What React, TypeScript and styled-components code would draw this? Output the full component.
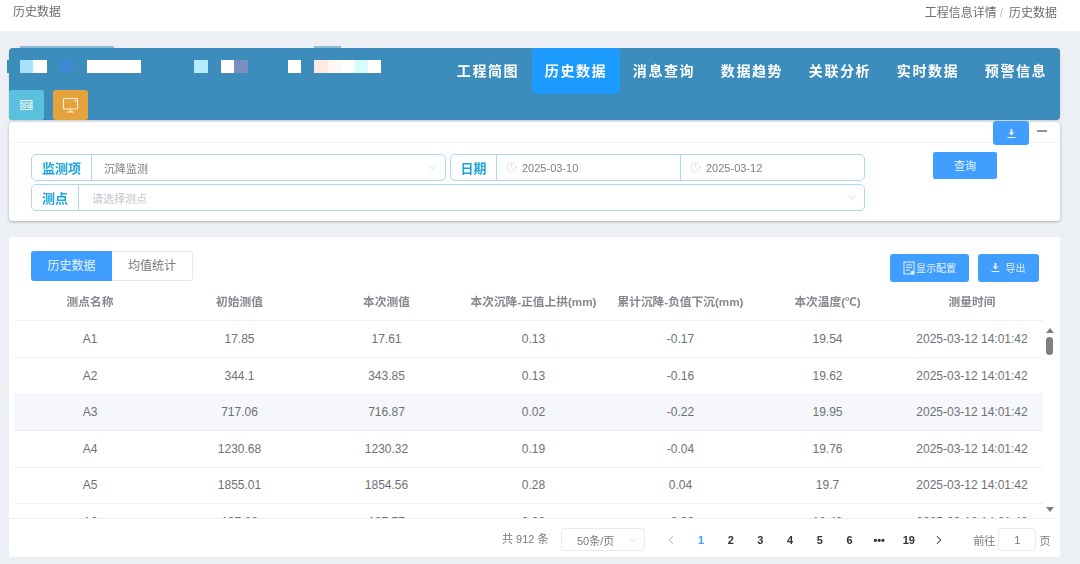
import React from "react";
import styled, { createGlobalStyle } from "styled-components";
import { ChevronDown, ChevronLeft, ChevronRight, Clock } from "lucide-react";

const Global = createGlobalStyle`
  html, body { margin: 0; padding: 0; height: 100%; overflow: hidden; background: #ecf0f5; }
  body { font-family: "Liberation Sans", "Noto Sans CJK SC", sans-serif; color: #606266; }
  * { box-sizing: border-box; }
`;

const Page = styled.div`
  width: 1080px;
  height: 564px;
  display: flex;
  flex-direction: column;
  filter: blur(0.35px);
`;
const TopBar = styled.div`
  height: 31px;
  flex: none;
  background: #fff;
  display: flex;
  justify-content: space-between;
  align-items: flex-start;
  padding: 5px 23px 0 13px;
  font-size: 12px;
  line-height: 14px;
  color: #6b6e73;
`;
const Crumbs = styled.div`
  display: flex;
  margin-top: 1px;
  span { color: #b4b7bc; margin: 0 6px 0 3px; }
`;
const Main = styled.div`
  flex: 1;
  display: flex;
  flex-direction: column;
  padding: 17px 20px 0 9px;
`;
const Header = styled.div`
  position: relative;
  height: 72px;
  flex: none;
  background: #3d8dbc;
  border-radius: 4px;
  display: flex;
  flex-direction: column;
  box-shadow: 0 1px 2px rgba(0, 0, 0, 0.15);
`;
const HeaderTop = styled.div`
  height: 42px;
  flex: none;
  display: flex;
  justify-content: space-between;
`;
const Mosaic = styled.div`
  display: flex;
  height: 13px;
  margin: 12px 0 0 11px;
`;
const Tile = styled.i<{ $c: string; $w?: number }>`
  display: block;
  height: 13px;
  width: ${(p) => p.$w ?? 13.4}px;
  background: ${(p) => p.$c};
`;
const Bump = styled.i<{ $l: number; $w: number }>`
  position: absolute;
  left: ${(p) => p.$l}px;
  top: -2px;
  width: ${(p) => p.$w}px;
  height: 2px;
  background: #8fb9d3;
`;
const SideBump = styled.i`
  position: absolute;
  left: -2px;
  top: 12px;
  width: 2px;
  height: 13px;
  background: #3d8dbc;
`;
const Nav = styled.nav`
  display: flex;
  height: 46px;
`;
const NavItem = styled.div<{ $active?: boolean }>`
  width: 88px;
  display: flex;
  align-items: center;
  justify-content: center;
  color: #fff;
  font-weight: 700;
  font-size: 14px;
  letter-spacing: 1.6px;
  padding-bottom: 3px;
  border-radius: 4px;
  background: ${(p) => (p.$active ? "#1c9bfd" : "transparent")};
`;
const HeaderActions = styled.div`
  display: flex;
  gap: 9px;
`;
const SquareBtn = styled.div<{ $c: string }>`
  width: 35px;
  height: 30px;
  border-radius: 3px;
  background: ${(p) => p.$c};
  display: flex;
  align-items: center;
  justify-content: center;
  color: #fff;
`;
const FilterCard = styled.section`
  margin-top: 2px;
  height: 99px;
  flex: none;
  background: #fff;
  border-radius: 4px;
  box-shadow: 0 1px 3px rgba(0, 0, 0, 0.28);
`;
const FilterHead = styled.div`
  height: 21px;
  border-bottom: 1px solid #f2f4f6;
  display: flex;
  justify-content: flex-end;
  padding-right: 13px;
`;
const MiniBtn = styled.div`
  width: 36px;
  height: 24px;
  margin-top: -1px;
  background: #409eff;
  border-radius: 3px;
  display: flex;
  align-items: center;
  justify-content: center;
  color: #eaf4ff;
  position: relative;
  z-index: 1;
`;
const Minus = styled.i`
  display: block;
  width: 10px;
  height: 2px;
  margin: 8px 0 0 8px;
  background: #8c93a8;
`;
const FilterBody = styled.div`
  display: flex;
  padding: 11px 0 0 22px;
`;
const Fields = styled.div`
  width: 834px;
  display: flex;
  flex-direction: column;
  gap: 3px;
`;
const FieldRow = styled.div`
  display: flex;
  gap: 4px;
`;
const Group = styled.div`
  flex: 1;
  height: 27px;
  display: flex;
  border: 1px solid #aedae7;
  border-radius: 5px;
  min-width: 0;
`;
const GroupLabel = styled.div<{ $w: number }>`
  width: ${(p) => p.$w}px;
  flex: none;
  border-right: 1px solid #aedae7;
  display: flex;
  align-items: center;
  justify-content: center;
  color: #1ea5dc;
  font-weight: 700;
  font-size: 13px;
`;
const SelectBox = styled.div<{ $pad: number; $muted?: boolean }>`
  flex: 1;
  display: flex;
  align-items: center;
  justify-content: space-between;
  padding: 0 6px 0 ${(p) => p.$pad}px;
  font-size: 11px;
  color: ${(p) => (p.$muted ? "#c0c4cc" : "#7c7f85")};
  svg { color: #c0c4cc; }
`;
const DateCell = styled.div<{ $line?: boolean }>`
  flex: 1;
  display: flex;
  align-items: center;
  gap: 5px;
  padding-left: 9px;
  font-size: 11px;
  color: #7c7f85;
  border-left: ${(p) => (p.$line ? "1px solid #aedae7" : "none")};
  svg { color: #c8ccd2; }
`;
const QueryBtn = styled.div`
  width: 64px;
  height: 27px;
  margin: -2px 0 0 68px;
  padding-bottom: 2px;
  background: #409eff;
  border-radius: 2px;
  color: #e8f3ff;
  font-size: 11px;
  display: flex;
  align-items: center;
  justify-content: center;
`;
const TableCard = styled.section`
  margin-top: 16px;
  height: 320px;
  flex: none;
  background: #fff;
  border-radius: 3px;
  display: flex;
  flex-direction: column;
`;
const CardTools = styled.div`
  height: 47px;
  flex: none;
  display: flex;
  justify-content: space-between;
  padding: 14px 21px 0 22px;
`;
const Tabs = styled.div`
  display: flex;
  width: 162px;
  height: 30px;
  border: 1px solid #e6e8eb;
  border-radius: 3px;
`;
const Tab = styled.div<{ $active?: boolean }>`
  flex: ${(p) => (p.$active ? "0 0 81px" : 1)};
  margin: ${(p) => (p.$active ? "-1px 0 -1px -1px" : 0)};
  padding-bottom: 3px;
  border-radius: ${(p) => (p.$active ? "3px 0 0 3px" : 0)};
  background: ${(p) => (p.$active ? "#409eff" : "#fff")};
  color: ${(p) => (p.$active ? "#e8f3ff" : "#75787e")};
  font-size: 12px;
  display: flex;
  align-items: center;
  justify-content: center;
`;
const ToolBtns = styled.div`
  display: flex;
  gap: 9px;
  padding-top: 3px;
`;
const ToolBtn = styled.div<{ $w: number; $gap: number; $pr?: number }>`
  width: ${(p) => p.$w}px;
  height: 28px;
  padding: 0 ${(p) => p.$pr ?? 0}px 1px 0;
  background: #409eff;
  border-radius: 3px;
  color: #e3f0ff;
  font-size: 10px;
  display: flex;
  align-items: center;
  justify-content: center;
  gap: ${(p) => p.$gap}px;
`;
const GridRow = styled.div<{ $h: number; $hl?: boolean }>`
  display: grid;
  grid-template-columns: 152px repeat(5, 147px) 142px;
  height: ${(p) => p.$h}px;
  flex: none;
  margin-left: 5px;
  width: 1029px;
  background: ${(p) => (p.$hl ? "#f5f7fa" : "#fff")};
  border-bottom: 1px solid #eef0f4;
  align-items: center;
  text-align: center;
`;
const HeadCell = styled.div`
  font-size: 11.7px;
  font-weight: 700;
  color: #85888e;
  white-space: nowrap;
  padding-bottom: 3px;
`;
const Cell = styled.div`
  font-size: 12px;
  color: #6e7176;
  white-space: nowrap;
`;
const BodyWrap = styled.div`
  position: relative;
  height: 198px;
  flex: none;
  margin-right: 4px;
  overflow: hidden;
  display: flex;
  border-bottom: 1px solid #eceef2;
`;
const Rows = styled.div`
  flex: none;
  width: 1034px;
  display: flex;
  flex-direction: column;
`;
const Scrollbar = styled.div`
  flex: 1;
  display: flex;
  flex-direction: column;
  align-items: center;
  padding: 7px 0 6px;
  background: #fff;
`;
const Arrow = styled.i<{ $down?: boolean }>`
  width: 0;
  height: 0;
  border-left: 4px solid transparent;
  border-right: 4px solid transparent;
  ${(p) => (p.$down ? "border-top: 5px solid #7f7f7f;" : "border-bottom: 5px solid #7f7f7f;")}
`;
const Thumb = styled.i`
  width: 7px;
  height: 18px;
  margin-top: 4px;
  border-radius: 4px;
  background: #7f7f7f;
  margin-bottom: auto;
`;
const Pager = styled.div`
  flex: 1;
  display: flex;
  align-items: flex-start;
  padding: 9px 0 0 493px;
  font-size: 11px;
  color: #777a80;
`;
const Total = styled.div`
  width: 59px;
  line-height: 23px;
  white-space: nowrap;
`;
const SizeSelect = styled.div`
  width: 84px;
  height: 23px;
  border: 1px solid #e8eaee;
  border-radius: 3px;
  display: flex;
  align-items: center;
  justify-content: space-between;
  padding: 0 5px 0 15px;
  svg { color: #c0c4cc; }
`;
const Pages = styled.div`
  display: flex;
  margin: 0 0 0 11.5px;
  height: 23px;
`;
const PageNum = styled.div<{ $active?: boolean; $muted?: boolean }>`
  width: 29.7px;
  display: flex;
  align-items: center;
  justify-content: center;
  font-weight: 700;
  color: ${(p) => (p.$active ? "#409eff" : p.$muted ? "#b8bcc4" : "#303133")};
`;
const Jump = styled.div`
  display: flex;
  align-items: center;
  height: 23px;
  margin-left: 20px;
  gap: 3px;
  white-space: nowrap;
`;
const JumpBox = styled.div`
  width: 38px;
  height: 23px;
  border: 1px solid #e8eaee;
  border-radius: 3px;
  display: flex;
  align-items: center;
  justify-content: center;
`;

const tiles: [string, number?][] = [
  ["#a9e2fb"], ["#fffdfe"], ["transparent"], ["#3f88d2"], ["transparent"], ["#ffffff", 53.6],
  ["transparent", 53.6], ["#b3ebff"], ["transparent"], ["#ffffff"], ["#7a8fc0"],
  ["transparent", 40], ["#ffffff"], ["transparent"], ["#ffe9e1"], ["#fff8f3"], ["#ffffff"], ["#d8fbff"], ["#ffffff"],
];
const navs = ["工程简图", "历史数据", "消息查询", "数据趋势", "关联分析", "实时数据", "预警信息"];
const columns = ["测点名称", "初始测值", "本次测值", "本次沉降-正值上拱(mm)", "累计沉降-负值下沉(mm)", "本次温度(℃)", "测量时间"];
const time = "2025-03-12 14:01:42";
const rows = [
  ["A1", "17.85", "17.61", "0.13", "-0.17", "19.54"],
  ["A2", "344.1", "343.85", "0.13", "-0.16", "19.62"],
  ["A3", "717.06", "716.87", "0.02", "-0.22", "19.95"],
  ["A4", "1230.68", "1230.32", "0.19", "-0.04", "19.76"],
  ["A5", "1855.01", "1854.56", "0.28", "0.04", "19.7"],
  ["A6", "137.66", "137.77", "0.00", "-0.33", "19.49"],
];

const PanelIcon = () => (
  <svg width="13" height="12" viewBox="0 0 13 12" fill="none" stroke="currentColor" strokeWidth="1">
    <rect x="1" y="1.5" width="11" height="9" />
    <path d="M1 4h11M3 6h3v2.5H3zM8 6h2.5v2.5H8z" />
  </svg>
);
const ScreenIcon = () => (
  <svg width="17" height="17" viewBox="0 0 17 17" fill="none" stroke="#fff3dc" strokeWidth="1.1">
    <rect x="1.5" y="1.5" width="14" height="10.5" rx="0.8" />
    <path d="M8.5 12v2.5M5 15h7" />
    <path d="M12.5 3l1.8 1.8" />
  </svg>
);
const ConfigIcon = () => (
  <svg width="12" height="14" viewBox="0 0 12 14" fill="none" stroke="currentColor" strokeWidth="1">
    <rect x="1" y="1" width="10" height="12" />
    <path d="M3 4h6M3 6.5h6M3 9h4" />
    <circle cx="9.5" cy="11.5" r="1.5" fill="currentColor" />
  </svg>
);
const SaveIcon = () => (
  <svg width="11" height="11" viewBox="0 0 11 11" fill="currentColor">
    <path d="M4.6 1h1.8v3.6h2L5.5 7.4 2.6 4.6h2z" />
    <rect x="1.5" y="9" width="8" height="1" />
  </svg>
);

export default function App() {
  return (
    <Page>
      <Global />
      <TopBar>
        <div>历史数据</div>
        <Crumbs>工程信息详情<span>/</span>历史数据</Crumbs>
      </TopBar>
      <Main>
        <Header>
          <Bump $l={11} $w={94} />
          <Bump $l={305} $w={27} />
          <SideBump />
          <HeaderTop>
            <Mosaic>
              {tiles.map(([c, w], i) => (
                <Tile key={i} $c={c} $w={w} />
              ))}
            </Mosaic>
            <Nav>
              {navs.map((n) => (
                <NavItem key={n} $active={n === "历史数据"}>{n}</NavItem>
              ))}
            </Nav>
          </HeaderTop>
          <HeaderActions>
            <SquareBtn $c="#5bbfde"><PanelIcon /></SquareBtn>
            <SquareBtn $c="#e5a33c"><ScreenIcon /></SquareBtn>
          </HeaderActions>
        </Header>

        <FilterCard>
          <FilterHead>
            <MiniBtn><SaveIcon /></MiniBtn>
            <Minus />
          </FilterHead>
          <FilterBody>
            <Fields>
              <FieldRow>
                <Group>
                  <GroupLabel $w={60}>监测项</GroupLabel>
                  <SelectBox $pad={12}>沉降监测<ChevronDown size={13} strokeWidth={1.2} /></SelectBox>
                </Group>
                <Group>
                  <GroupLabel $w={46}>日期</GroupLabel>
                  <DateCell><Clock size={11} strokeWidth={1.2} />2025-03-10</DateCell>
                  <DateCell $line><Clock size={11} strokeWidth={1.2} />2025-03-12</DateCell>
                </Group>
              </FieldRow>
              <FieldRow>
                <Group>
                  <GroupLabel $w={47}>测点</GroupLabel>
                  <SelectBox $pad={13} $muted>请选择测点<ChevronDown size={13} strokeWidth={1.2} /></SelectBox>
                </Group>
              </FieldRow>
            </Fields>
            <QueryBtn>查询</QueryBtn>
          </FilterBody>
        </FilterCard>

        <TableCard>
          <CardTools>
            <Tabs>
              <Tab $active>历史数据</Tab>
              <Tab>均值统计</Tab>
            </Tabs>
            <ToolBtns>
              <ToolBtn $w={79} $gap={1}><ConfigIcon />显示配置</ToolBtn>
              <ToolBtn $w={61} $gap={5} $pr={2}><SaveIcon />导出</ToolBtn>
            </ToolBtns>
          </CardTools>
          <GridRow $h={37}>
            {columns.map((c) => <HeadCell key={c}>{c}</HeadCell>)}
          </GridRow>
          <BodyWrap>
            <Rows>
              {rows.map((r, idx) => (
                <GridRow key={r[0]} $h={idx === 0 ? 37 : 36.5} $hl={r[0] === "A3"}>
                  {r.map((v, i) => <Cell key={i}>{v}</Cell>)}
                  <Cell>{time}</Cell>
                </GridRow>
              ))}
            </Rows>
            <Scrollbar>
              <Arrow />
              <Thumb />
              <Arrow $down />
            </Scrollbar>
          </BodyWrap>
          <Pager>
            <Total>共 912 条</Total>
            <SizeSelect>50条/页<ChevronDown size={12} strokeWidth={1.2} /></SizeSelect>
            <Pages>
              <PageNum $muted><ChevronLeft size={14} strokeWidth={1.8} /></PageNum>
              {["1", "2", "3", "4", "5", "6", "•••", "19"].map((n) => (
                <PageNum key={n} $active={n === "1"}>{n}</PageNum>
              ))}
              <PageNum><ChevronRight size={14} strokeWidth={1.8} /></PageNum>
            </Pages>
            <Jump>前往<JumpBox>1</JumpBox>页</Jump>
          </Pager>
        </TableCard>
      </Main>
    </Page>
  );
}
